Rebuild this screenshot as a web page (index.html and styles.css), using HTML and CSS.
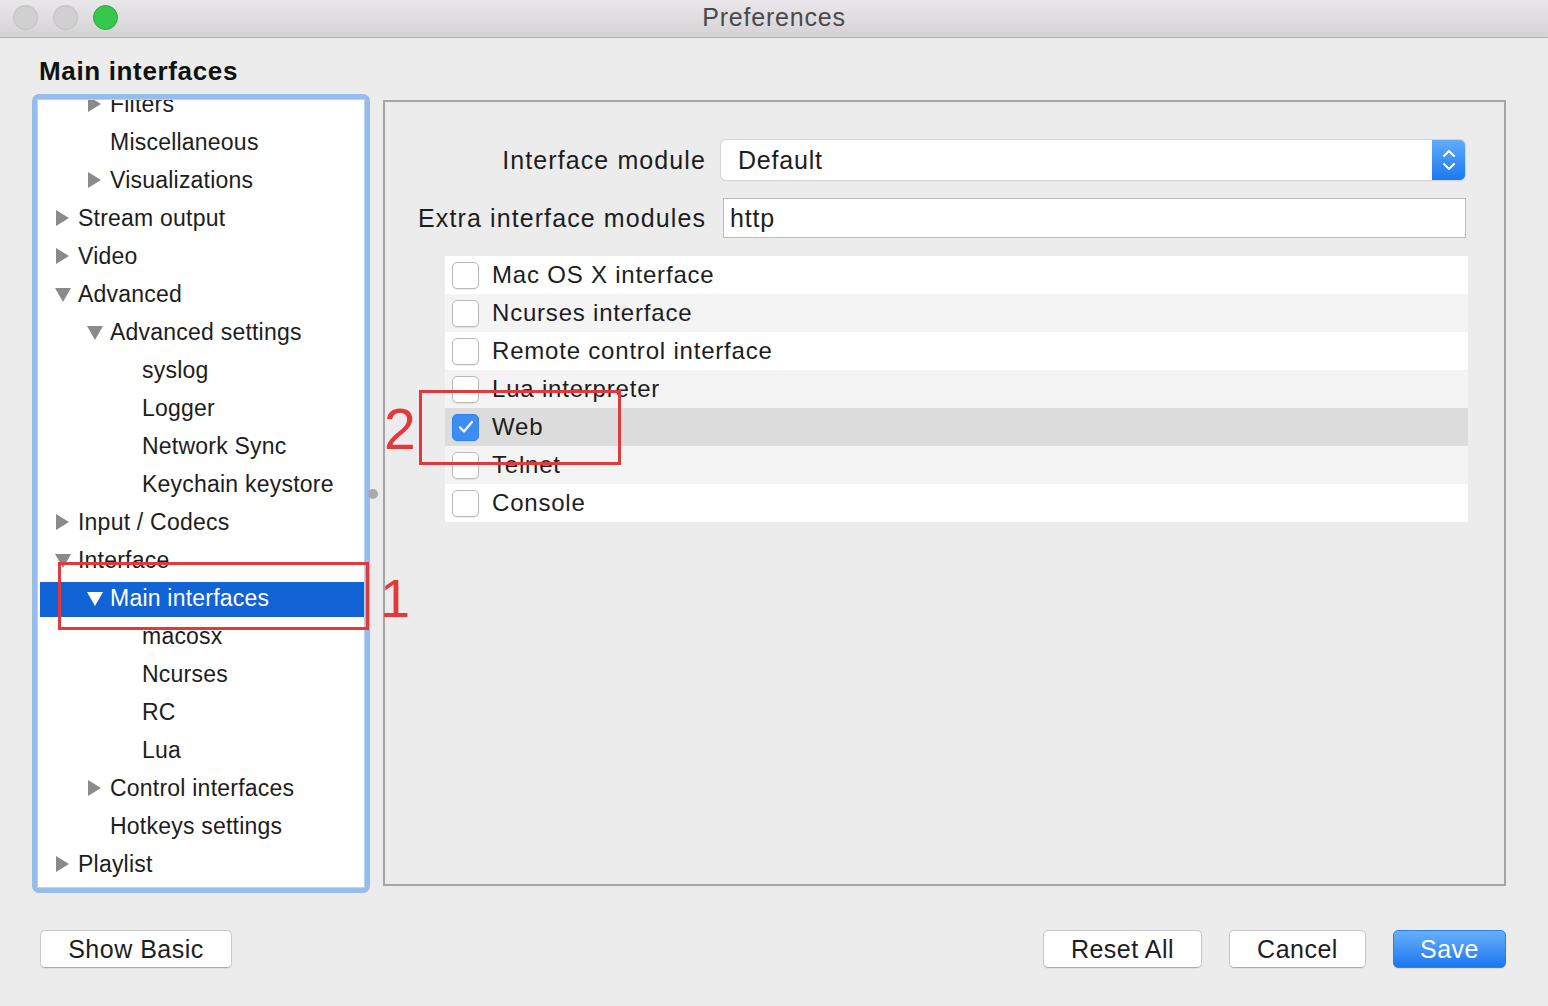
FILE: index.html
```html
<!DOCTYPE html>
<html lang="en">
<head>
<meta charset="utf-8">
<title>Preferences</title>
<link rel="stylesheet" href="styles.css">
</head>
<body>
<div class="titlebar">
  <div class="lights">
    <span class="light"></span>
    <span class="light"></span>
    <span class="light green"></span>
  </div>
  <div class="title">Preferences</div>
  <div></div>
</div>

<h1 class="heading">Main interfaces</h1>

<div class="main">
  <div class="tree-ring">
    <div class="tree">
      <div class="tree-list">
        <div class="row l1"><span class="tri r"></span>Filters</div>
        <div class="row l1"><span class="tri"></span>Miscellaneous</div>
        <div class="row l1"><span class="tri r"></span>Visualizations</div>
        <div class="row l0"><span class="tri r"></span>Stream output</div>
        <div class="row l0"><span class="tri r"></span>Video</div>
        <div class="row l0"><span class="tri d"></span>Advanced</div>
        <div class="row l1"><span class="tri d"></span>Advanced settings</div>
        <div class="row l2"><span class="tri"></span>syslog</div>
        <div class="row l2"><span class="tri"></span>Logger</div>
        <div class="row l2"><span class="tri"></span>Network Sync</div>
        <div class="row l2"><span class="tri"></span>Keychain keystore</div>
        <div class="row l0"><span class="tri r"></span>Input / Codecs</div>
        <div class="row l0"><span class="tri d"></span>Interface</div>
        <div class="row l1 sel"><span class="tri d"></span>Main interfaces</div>
        <div class="row l2"><span class="tri"></span>macosx</div>
        <div class="row l2"><span class="tri"></span>Ncurses</div>
        <div class="row l2"><span class="tri"></span>RC</div>
        <div class="row l2"><span class="tri"></span>Lua</div>
        <div class="row l1"><span class="tri r"></span>Control interfaces</div>
        <div class="row l1"><span class="tri"></span>Hotkeys settings</div>
        <div class="row l0"><span class="tri r"></span>Playlist</div>
      </div>
    </div>
  </div>

  <div class="splitter"><span class="knob"></span></div>

  <div class="panel">
    <div class="form">
      <div class="label">Interface module</div>
      <div class="select">
        <span>Default</span>
        <span class="stepper">
          <svg width="14" height="26" viewBox="0 0 14 26"><polyline points="2,9 7,4 12,9" fill="none" stroke="#fff" stroke-width="2" stroke-linecap="round" stroke-linejoin="round"/><polyline points="2,17 7,22 12,17" fill="none" stroke="#fff" stroke-width="2" stroke-linecap="round" stroke-linejoin="round"/></svg>
        </span>
      </div>
      <div class="label">Extra interface modules</div>
      <div class="input">http</div>
    </div>

    <div class="checks">
      <div class="check-row"><span class="box"></span>Mac OS X interface</div>
      <div class="check-row"><span class="box"></span>Ncurses interface</div>
      <div class="check-row"><span class="box"></span>Remote control interface</div>
      <div class="check-row"><span class="box"></span>Lua interpreter</div>
      <div class="check-row sel"><span class="box on"><svg width="18" height="16" viewBox="0 0 18 16"><polyline points="3,8.5 7,12.5 15,3" fill="none" stroke="#fff" stroke-width="2.2" stroke-linecap="round" stroke-linejoin="round"/></svg></span>Web</div>
      <div class="check-row"><span class="box"></span>Telnet</div>
      <div class="check-row"><span class="box"></span>Console</div>
    </div>
  </div>
</div>

<div class="footer">
  <button class="btn basic">Show Basic</button>
  <button class="btn reset">Reset All</button>
  <button class="btn cancel">Cancel</button>
  <button class="btn save">Save</button>
</div>

<div class="anno-box anno-box-1"></div>
<div class="anno-num anno-num-1">1</div>
<div class="anno-box anno-box-2"></div>
<div class="anno-num anno-num-2">2</div>
</body>
</html>
```

FILE: styles.css
```css
* {
  box-sizing: border-box;
  margin: 0;
  padding: 0;
}

html,
body {
  width: 1548px;
  height: 1006px;
  overflow: hidden;
}

body {
  position: relative;
  background: #ececec;
  font-family: "Liberation Sans", Arial, sans-serif;
  color: #1d1d1d;
}

/* ---------- title bar ---------- */
.titlebar {
  height: 38px;
  background: linear-gradient(#e9e7e9, #d4d2d4);
  border-bottom: 1px solid #b3b1b3;
  display: grid;
  grid-template-columns: 1fr auto 1fr;
  align-items: center;
}

.lights {
  display: flex;
  gap: 15px;
  padding-left: 13px;
  margin-top: -3px;
}

.light {
  width: 25px;
  height: 25px;
  border-radius: 50%;
  background: #d1d0d1;
  border: 1px solid #c2c1c2;
}

.light.green {
  background: #35c84a;
  border-color: #2cab3d;
}

.title {
  font-size: 25px;
  letter-spacing: 0.8px;
  color: #4a4a4a;
  margin-top: -3px;
}

/* ---------- heading ---------- */
.heading {
  font-size: 26px;
  font-weight: bold;
  letter-spacing: 0.65px;
  line-height: 32px;
  margin: 17px 0 7px 39px;
  color: #111;
}

/* ---------- main ---------- */
.main {
  display: flex;
  align-items: flex-start;
  padding-left: 32px;
}

.tree-ring {
  width: 338px;
  height: 799px;
  padding: 5px;
  background: #95bcea;
  border-radius: 7px;
}

.tree {
  height: 100%;
  background: #fff;
  border: 1px solid #b9d2f1;
  overflow: hidden;
  padding-left: 2px;
}

.tree-list {
  margin-top: -15px;
}

.row {
  height: 38px;
  display: flex;
  align-items: center;
  font-size: 23px;
  letter-spacing: 0.22px;
  white-space: nowrap;
  color: #1d1d1d;
}

.row.l0 { padding-left: 16px; }
.row.l1 { padding-left: 48px; }
.row.l2 { padding-left: 80px; }

.tri {
  width: 22px;
  flex: none;
  display: flex;
  align-items: center;
  height: 100%;
}

.tri.r::before {
  content: "";
  border-left: 13px solid #8a8a8a;
  border-top: 8px solid transparent;
  border-bottom: 8px solid transparent;
}

.tri.d::before {
  content: "";
  margin-left: -1px;
  margin-top: 2px;
  border-top: 14px solid #8a8a8a;
  border-left: 8px solid transparent;
  border-right: 8px solid transparent;
}

.row.sel {
  background: linear-gradient(transparent 3px, #1263d5 3px);
  color: #fff;
}

.row.sel .tri.d::before {
  border-top-color: #fff;
}

.splitter {
  width: 13px;
  align-self: stretch;
  display: flex;
  align-items: center;
}

.knob {
  width: 10px;
  height: 10px;
  border-radius: 50%;
  background: #a9a9a9;
  margin-left: -2px;
}

/* ---------- right panel ---------- */
.panel {
  width: 1123px;
  height: 786px;
  margin-top: 6px;
  border: 2px solid #a5a5a5;
  padding-top: 38px;
}

.form {
  display: grid;
  grid-template-columns: 321px 744px;
  column-gap: 15px;
  row-gap: 18px;
  align-items: center;
}

.label {
  text-align: right;
  font-size: 25px;
  letter-spacing: 1.1px;
  color: #1d1d1d;
  margin-top: 1px;
}

.select {
  height: 40px;
  background: #fff;
  border-radius: 5px;
  box-shadow: 0 0 0 1px #d4d4d4, 0 1px 1px rgba(0, 0, 0, 0.18);
  display: flex;
  align-items: center;
  padding-left: 17px;
  font-size: 25px;
  letter-spacing: 0.8px;
}

.stepper {
  margin-left: auto;
  width: 33px;
  height: 40px;
  border-radius: 0 5px 5px 0;
  background: linear-gradient(#61acfb, #1b79f0);
  display: flex;
  align-items: center;
  justify-content: center;
}

.input {
  height: 40px;
  width: 743px;
  margin-left: 2px;
  background: #fff;
  border: 1px solid #bdbdbd;
  padding-left: 6px;
  display: flex;
  align-items: center;
  font-size: 25px;
  letter-spacing: 0.8px;
}

.checks {
  margin: 18px 0 0 60px;
  width: 1023px;
}

.check-row {
  height: 38px;
  display: flex;
  align-items: center;
  gap: 13px;
  padding-left: 7px;
  font-size: 24px;
  letter-spacing: 0.8px;
  background: #fff;
  color: #1d1d1d;
}

.check-row:nth-child(even) {
  background: #f4f4f4;
}

.check-row.sel {
  background: #dcdcdc;
}

.box {
  width: 27px;
  height: 27px;
  flex: none;
  border-radius: 5px;
  border: 1px solid #b9b9b9;
  background: #fff;
  box-shadow: 0 1px 1px rgba(0, 0, 0, 0.08);
}

.box.on {
  background: #3c8ef6;
  border-color: #3583eb;
  display: flex;
  align-items: center;
  justify-content: center;
}

/* ---------- footer ---------- */
.footer {
  display: flex;
  gap: 27px;
  margin-top: 37px;
  padding: 0 42px 0 40px;
}

.btn {
  height: 38px;
  background: #fff;
  border: 1px solid #c7c7c7;
  border-bottom-color: #ababab;
  border-radius: 5px;
  font-family: "Liberation Sans", Arial, sans-serif;
  font-size: 25px;
  letter-spacing: 0.5px;
  color: #1d1d1d;
  display: flex;
  align-items: center;
  justify-content: center;
  box-shadow: 0 1px 1px rgba(0, 0, 0, 0.06);
}

.btn.basic { width: 192px; margin-right: auto; }
.btn.reset { width: 159px; }
.btn.cancel { width: 137px; }

.btn.save {
  width: 113px;
  background: linear-gradient(#68affb, #1b77f0);
  border-color: #2a7fe8;
  color: #fff;
}

/* ---------- annotations ---------- */
.anno-box {
  position: absolute;
  border: 3px solid #e23a3c;
}

.anno-box-1 {
  left: 58px;
  top: 562px;
  width: 311px;
  height: 68px;
}

.anno-box-2 {
  left: 419px;
  top: 390px;
  width: 202px;
  height: 75px;
}

.anno-num {
  position: absolute;
  color: #e23a3c;
  line-height: 1;
}

.anno-num-1 {
  left: 380px;
  top: 571px;
  font-size: 54px;
}

.anno-num-2 {
  left: 384px;
  top: 401px;
  font-size: 57px;
}
```
